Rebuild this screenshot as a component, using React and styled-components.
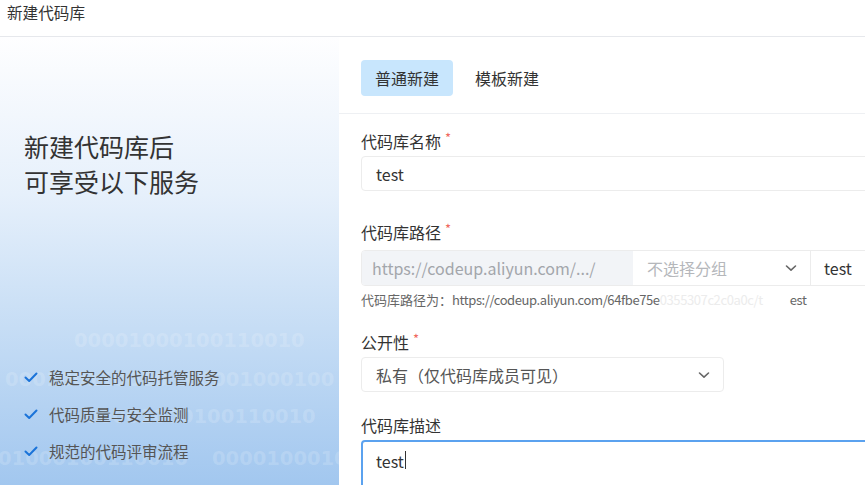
import styled, { createGlobalStyle } from "styled-components";

const GlobalStyle = createGlobalStyle`
  html, body {
    margin: 0;
    padding: 0;
    background: #fff;
    font-family: "Noto Sans CJK SC", "Noto Sans", sans-serif;
    color: #333;
    overflow: hidden;
  }
`;

const Page = styled.div`
  width: 865px;
  height: 485px;
  display: flex;
  flex-direction: column;
  overflow: hidden;
`;

const Header = styled.div`
  height: 37px;
  flex-shrink: 0;
  display: flex;
  align-items: center;
  padding: 0 0 13px 7px;
  font-size: 15.6px;
  color: #333;
  border-bottom: 1px solid #e6e8ec;
  box-sizing: border-box;
`;

const Body = styled.div`
  flex: 1;
  display: flex;
  min-height: 0;
`;

const Aside = styled.div`
  position: relative;
  width: 339px;
  flex-shrink: 0;
  background: linear-gradient(180deg, #fefeff 0%, #e6f0fb 35%, #c6ddf5 65%, #a2c7ef 100%);
  display: flex;
  flex-direction: column;
  padding: 92px 0 0 24px;
  box-sizing: border-box;
  overflow: hidden;
`;

const Headline = styled.div`
  position: relative;
  font-size: 25px;
  line-height: 35px;
  color: #333;
  z-index: 1;
`;

const Binary = styled.div`
  position: absolute;
  left: ${(p) => p.$x}px;
  top: ${(p) => p.$y}px;
  font-family: "DejaVu Sans", "Noto Sans", sans-serif;
  font-weight: bold;
  font-size: 19.5px;
  line-height: 24px;
  color: rgba(255, 255, 255, 0.17);
  white-space: nowrap;
  user-select: none;
`;

const Features = styled.ul`
  position: relative;
  list-style: none;
  margin: auto 0 0 -2px;
  padding: 0 0 23px;
  display: flex;
  flex-direction: column;
  gap: 15px;
  z-index: 1;
`;

const Feature = styled.li`
  display: flex;
  align-items: center;
  gap: 9px;
  font-size: 15.5px;
  line-height: 22px;
  color: #555;
`;

const Main = styled.div`
  flex: 1;
  display: flex;
  flex-direction: column;
  min-width: 0;
`;

const TabBar = styled.div`
  display: flex;
  gap: 8px;
  padding: 23px 22px 17px;
  border-bottom: 1px solid #eef0f3;
`;

const Tab = styled.div`
  height: 36px;
  padding: 0 14px;
  display: flex;
  align-items: center;
  border-radius: 4px;
  font-size: 16px;
  color: #333;
  background: ${(p) => (p.$active ? "#c8e6fd" : "transparent")};
`;

const Form = styled.div`
  padding: 16px 0 0 22px;
  display: flex;
  flex-direction: column;
`;

const Field = styled.div`
  display: flex;
  flex-direction: column;
  margin-bottom: ${(p) => p.$gap ?? 22}px;
`;

const Label = styled.div`
  font-size: 16px;
  line-height: 22px;
  color: #333;
  margin-bottom: 4px;
  display: flex;
  align-items: flex-start;
`;

const Star = styled.span`
  color: #f0685e;
  font-size: 13px;
  margin-left: 4px;
  line-height: 16px;
`;

const Input = styled.div`
  height: ${(p) => p.$height || 35}px;
  width: ${(p) => p.$width || "calc(100% + 10px)"};
  box-sizing: border-box;
  border: ${(p) => (p.$focus ? "2px solid #5ba2ef" : "1px solid #ececec")};
  border-radius: 4px;
  display: flex;
  align-items: ${(p) => (p.$multiline ? "flex-start" : "center")};
  padding: ${(p) => (p.$multiline ? "7px 13px 0" : "0 14px")};
  font-size: 16px;
  color: #333;
`;

const Group = styled.div`
  height: 36px;
  margin-top: 3px;
  display: flex;
  border: 1px solid #ececec;
  border-radius: 4px;
  width: calc(100% + 10px);
  box-sizing: border-box;
  overflow: hidden;
`;

const Addon = styled.div`
  width: 271px;
  flex-shrink: 0;
  background: #f2f4f7;
  color: #a3a6ab;
  display: flex;
  align-items: center;
  padding-left: 10px;
  box-sizing: border-box;
  font-size: 16px;
`;

const GroupSelect = styled.div`
  width: 178px;
  flex-shrink: 0;
  display: flex;
  align-items: center;
  justify-content: space-between;
  padding: 0 12px 0 14px;
  box-sizing: border-box;
  border-right: 1px solid #ececec;
  font-size: 16px;
  color: #b5b7bb;
`;

const GroupInput = styled.div`
  flex: 1;
  display: flex;
  align-items: center;
  padding-left: 13px;
  font-size: 16px;
  color: #333;
`;

const Hint = styled.div`
  font-size: 13px;
  line-height: 18px;
  color: #666;
  margin-top: 5px;
  white-space: nowrap;
`;

const Url = styled.span`
  letter-spacing: -0.4px;
`;

const Faint = styled.span`
  display: inline-block;
  vertical-align: bottom;
  width: 130px;
  color: #ececec;
  letter-spacing: -0.4px;
`;

const Select = styled(Input)`
  justify-content: space-between;
  padding-right: 12px;
  color: #555;
`;

const Caret = styled.span`
  display: inline-block;
  width: 1px;
  height: 18px;
  background: #333;
  margin: 2px 0 0 1px;
`;

const Check = () => (
  <svg width="18" height="18" viewBox="0 0 18 18">
    <path d="M3.5 9.5 L7.2 13 L14.5 5.5" fill="none" stroke="#1a73d9" strokeWidth="2" strokeLinecap="round" strokeLinejoin="round" />
  </svg>
);

const Chevron = () => (
  <svg width="14" height="14" viewBox="0 0 14 14">
    <path d="M2.5 5 L7 9.2 L11.5 5" fill="none" stroke="#666" strokeWidth="1.6" strokeLinecap="round" strokeLinejoin="round" />
  </svg>
);

const binaryRows = [
  { x: 74, y: 292, t: "00001000100110010" },
  { x: 5, y: 331, t: "000100110010" },
  { x: 185, y: 331, t: "00001000100" },
  { x: 85, y: 368, t: "00001000100110010" },
  { x: -2, y: 410, t: "01000100110010" },
  { x: 212, y: 410, t: "0000100010" },
];

const features = ["稳定安全的代码托管服务", "代码质量与安全监测", "规范的代码评审流程"];

export default function App() {
  return (
    <Page>
      <GlobalStyle />
      <Header>新建代码库</Header>
      <Body>
        <Aside>
          {binaryRows.map((r, i) => (
            <Binary key={i} $x={r.x} $y={r.y} aria-hidden="true">
              {r.t}
            </Binary>
          ))}
          <Headline>
            新建代码库后
            <br />
            可享受以下服务
          </Headline>
          <Features>
            {features.map((f) => (
              <Feature key={f}>
                <Check />
                {f}
              </Feature>
            ))}
          </Features>
        </Aside>
        <Main>
          <TabBar>
            <Tab $active>普通新建</Tab>
            <Tab>模板新建</Tab>
          </TabBar>
          <Form>
            <Field $gap={30}>
              <Label>
                代码库名称<Star>*</Star>
              </Label>
              <Input>test</Input>
            </Field>
            <Field $gap={22}>
              <Label>
                代码库路径<Star>*</Star>
              </Label>
              <Group>
                <Addon>https://codeup.aliyun.com/.../</Addon>
                <GroupSelect>
                  不选择分组
                  <Chevron />
                </GroupSelect>
                <GroupInput>test</GroupInput>
              </Group>
              <Hint>
                代码库路径为：<Url>https://codeup.aliyun.com/64fbe75e</Url>
                <Faint>0355307c2c0a0c/t</Faint>
                <Url>est</Url>
              </Hint>
            </Field>
            <Field>
              <Label>
                公开性<Star>*</Star>
              </Label>
              <Select $width="363px">
                私有（仅代码库成员可见）
                <Chevron />
              </Select>
            </Field>
            <Field>
              <Label>代码库描述</Label>
              <Input $focus $multiline $height={60}>
                test
                <Caret />
              </Input>
            </Field>
          </Form>
        </Main>
      </Body>
    </Page>
  );
}
